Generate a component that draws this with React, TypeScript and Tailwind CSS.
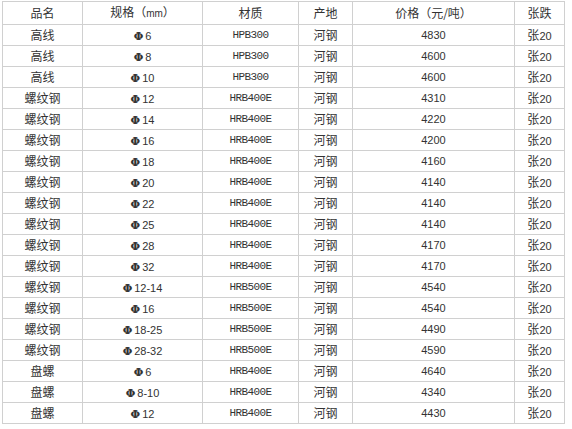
import React from "react";

const rows: [string, string, string, string, string, string][] = [
  ["高线", "6", "HPB300", "河钢", "4830", "张20"],
  ["高线", "8", "HPB300", "河钢", "4600", "张20"],
  ["高线", "10", "HPB300", "河钢", "4600", "张20"],
  ["螺纹钢", "12", "HRB400E", "河钢", "4310", "张20"],
  ["螺纹钢", "14", "HRB400E", "河钢", "4220", "张20"],
  ["螺纹钢", "16", "HRB400E", "河钢", "4200", "张20"],
  ["螺纹钢", "18", "HRB400E", "河钢", "4160", "张20"],
  ["螺纹钢", "20", "HRB400E", "河钢", "4140", "张20"],
  ["螺纹钢", "22", "HRB400E", "河钢", "4140", "张20"],
  ["螺纹钢", "25", "HRB400E", "河钢", "4140", "张20"],
  ["螺纹钢", "28", "HRB400E", "河钢", "4170", "张20"],
  ["螺纹钢", "32", "HRB400E", "河钢", "4170", "张20"],
  ["螺纹钢", "12-14", "HRB500E", "河钢", "4540", "张20"],
  ["螺纹钢", "16", "HRB500E", "河钢", "4540", "张20"],
  ["螺纹钢", "18-25", "HRB500E", "河钢", "4490", "张20"],
  ["螺纹钢", "28-32", "HRB500E", "河钢", "4590", "张20"],
  ["盘螺", "6", "HRB400E", "河钢", "4640", "张20"],
  ["盘螺", "8-10", "HRB400E", "河钢", "4340", "张20"],
  ["盘螺", "12", "HRB400E", "河钢", "4430", "张20"],
];

const cjk = "font-['Noto_Sans_CJK_SC',sans-serif] text-[12px]";
const td = "border border-[#d0d0d0] p-0 text-center align-middle leading-[16px]";

export default function App() {
  return (
    <div className="w-[572px] h-[429px] bg-white pt-px pl-[2px] text-[#333333] overflow-hidden">
      <table className="table-fixed border-collapse w-[562px]">
        <colgroup>
          <col className="w-[80px]" />
          <col className="w-[120px]" />
          <col className="w-[96px]" />
          <col className="w-[54px]" />
          <col className="w-[162px]" />
          <col className="w-[50px]" />
        </colgroup>
        <thead>
          <tr className="h-[23px]">
            <th className={`${td} ${cjk} font-normal`}>品名</th>
            <th className={`${td} ${cjk} font-normal`}>
              规格（<span className="font-['Liberation_Sans',sans-serif] text-[10px]">mm</span>）
            </th>
            <th className={`${td} ${cjk} font-normal`}>材质</th>
            <th className={`${td} ${cjk} font-normal`}>产地</th>
            <th className={`${td} ${cjk} font-normal`}>价格（元/吨）</th>
            <th className={`${td} ${cjk} font-normal`}>张跌</th>
          </tr>
        </thead>
        <tbody>
          {rows.map((r, i) => (
            <tr key={i} className="h-[21px]">
              <td className={`${td} ${cjk}`}>{r[0]}</td>
              <td className={td}>
                <span className="font-['DejaVu_Serif',serif] font-bold text-[11px] mr-[2px]">Φ</span>
                <span className="font-['Liberation_Sans',sans-serif] text-[11px]">{r[1]}</span>
              </td>
              <td className={`${td} font-['Liberation_Mono',monospace] text-[11px] tracking-[-0.6px]`}>{r[2]}</td>
              <td className={`${td} ${cjk}`}>{r[3]}</td>
              <td className={`${td} font-['Liberation_Sans',sans-serif] text-[11px]`}>{r[4]}</td>
              <td className={`${td} ${cjk}`}>
                张<span className="font-['Liberation_Sans',sans-serif] text-[11px]">20</span>
              </td>
            </tr>
          ))}
        </tbody>
      </table>
    </div>
  );
}
